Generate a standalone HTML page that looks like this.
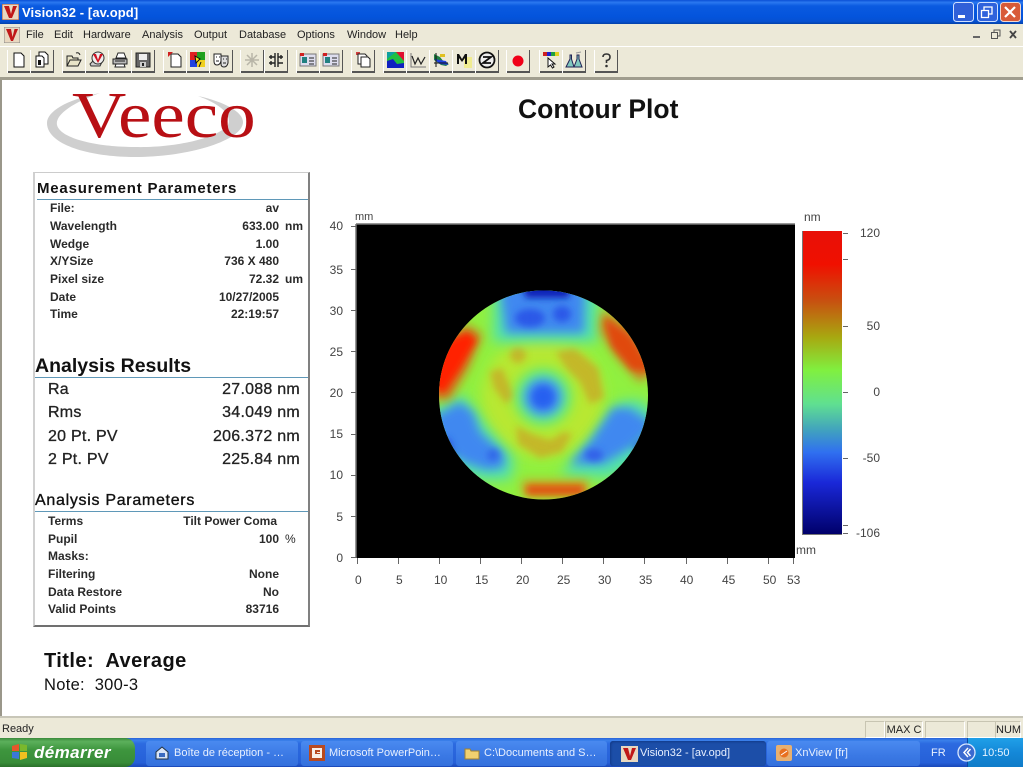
<!DOCTYPE html>
<html><head><meta charset="utf-8"><title>Vision32</title>
<style>
html,body{margin:0;padding:0}
body{width:1023px;height:767px;position:relative;overflow:hidden;background:#fff;font-family:"Liberation Sans",sans-serif;color:#111}
.a,.r{position:absolute;white-space:pre;line-height:16px;height:16px}
.r{text-align:right}
.b{position:absolute}
.l{font-weight:bold;font-size:12px;color:#2a2a2a}
.res{font-size:16px;letter-spacing:.25px;color:#222;-webkit-text-stroke:.3px #222}
.ax{font-size:12px;color:#444}
.m{font-size:11px;color:#222;top:27px}
.tb{position:absolute;top:50px;width:22px;height:21px;background:#ece9d8;border-right:1px solid #555;border-bottom:2px solid #555;box-shadow:-1px 0 0 #fff}
.tb svg{position:absolute;left:2px;top:1px}
.task{position:absolute;top:741px;height:25px;border-radius:3px;background:linear-gradient(#4a8af0,#3a78e4 60%,#3470dc);color:#e8f0ff;font-size:11px;line-height:24px;white-space:pre;padding-left:28px;box-sizing:border-box;overflow:hidden}
.task svg{position:absolute;left:8px;top:4px}
.pane{position:absolute;top:721px;height:15px;border:1px solid #c8c5b2;border-right-color:#fff;border-bottom-color:#fff;font-size:11px;line-height:16px;text-align:center;color:#222;white-space:pre;box-sizing:content-box}
</style></head><body>

<!-- Title bar -->
<div class="b" style="left:0;top:0;width:1023px;height:24px;background:linear-gradient(#0a4fd6 0,#2a78f0 10%,#0a5ae0 25%,#0454dc 70%,#0650d0 90%,#0340a8 100%)"></div>
<svg class="b" style="left:2px;top:4px" width="17" height="16"><rect width="17" height="16" fill="#e8d8c0" stroke="#b05030"/><path d="M2 2h5l2 8 2-8h4l-5 12H7z" fill="#c01818"/></svg>
<div class="a" style="left:22px;top:5px;color:#fff;font-weight:bold;font-size:13px;letter-spacing:.1px">Vision32 - [av.opd]</div>
<svg class="b" style="left:953px;top:2px" width="68" height="20">
 <rect x=".5" y=".5" width="20" height="19" rx="3" fill="#3060d8" stroke="#cfe0ff"/><rect x="5" y="13" width="7" height="3" fill="#fff"/>
 <rect x="24.5" y=".5" width="20" height="19" rx="3" fill="#2f62dc" stroke="#cfe0ff"/><path d="M31 8V5h8v7h-3M28.500 8.500h7v7h-7z" fill="none" stroke="#fff" stroke-width="1.300"/>
 <rect x="47.500" y=".5" width="20" height="19" rx="3" fill="#d85a38" stroke="#f0d8d0"/><path d="M52 5l10 10M62 5L52 15" stroke="#fff" stroke-width="2.200"/>
</svg>

<!-- Menu bar -->
<div class="b" style="left:0;top:24px;width:1023px;height:22px;background:#ece9d8"></div>
<svg class="b" style="left:4px;top:27px" width="16" height="16"><rect width="16" height="16" fill="#e8d8c0" stroke="#888"/><path d="M2 2h5l1.500 8 2-8h3.500l-5 12H7z" fill="#c01818"/></svg>
<div class="a m" style="left:26px">File</div>
<div class="a m" style="left:54px">Edit</div>
<div class="a m" style="left:83px">Hardware</div>
<div class="a m" style="left:142px">Analysis</div>
<div class="a m" style="left:194px">Output</div>
<div class="a m" style="left:239px">Database</div>
<div class="a m" style="left:297px">Options</div>
<div class="a m" style="left:347px">Window</div>
<div class="a m" style="left:395px">Help</div>
<svg class="b" style="left:970px;top:28px" width="50" height="14"><rect x="3" y="8" width="7" height="2" fill="#666"/><path d="M24 4V2h6v6h-2M21.500 4.500h6v6h-6z" fill="none" stroke="#555"/><path d="M40 3l6 7M46 3l-6 7" stroke="#444" stroke-width="1.800"/></svg>

<!-- Toolbar -->
<div class="b" style="left:0;top:46px;width:1023px;height:31px;background:#ece9d8;border-top:1px solid #fff;box-sizing:border-box"></div>
<div class="b" style="left:0;top:77px;width:1023px;height:3px;background:#a09d8e"></div>

<div class="tb" style="left:8px"><svg width="18" height="18"><path d="M4 2h7l3 3v11H4z" fill="#fff" stroke="#111"/></svg></div>
<div class="tb" style="left:31px"><svg width="18" height="18"><path d="M6 1h6l3 3v9H6z" fill="#fff" stroke="#111"/><path d="M3 5h6l2 2v9H3z" fill="#fff" stroke="#111"/><path d="M5 9h3v5H5z" fill="#111"/></svg></div>
<div class="tb" style="left:63px"><svg width="18" height="18"><path d="M2 15V5h5l1 2h5v2M2 15l3-6h11l-3 6z" fill="#e8e4c8" stroke="#222"/><path d="M11 2q3-1 4 2" fill="none" stroke="#222"/></svg></div>
<div class="tb" style="left:86px"><svg width="18" height="18"><path d="M2 13l4-4h9l-3 6H3z" fill="#ccc" stroke="#333"/><circle cx="10" cy="7" r="6" fill="#eee" stroke="#333"/><path d="M5 3h3l2 6 2-6h3l-5 9z" fill="#d01020"/></svg></div>
<div class="tb" style="left:109px"><svg width="18" height="18"><path d="M5 7l2-5h6l2 5z" fill="#fff" stroke="#222"/><path d="M2 8h14v5H2z" fill="#bbb" stroke="#222"/><path d="M5 13h8l1 3H4z" fill="#fff" stroke="#222"/><path d="M4 10h10" stroke="#222"/></svg></div>
<div class="tb" style="left:132px"><svg width="18" height="18"><path d="M2 2h14v14H2z" fill="#666" stroke="#222"/><path d="M5 3h8v6H5z" fill="#eee"/><path d="M6 11h6v5H6z" fill="#ccc"/><path d="M8 12h2v3H8z" fill="#222"/></svg></div>
<div class="tb" style="left:164px"><svg width="18" height="18"><path d="M5 3h7l3 3v10H5z" fill="#fff" stroke="#222"/><path d="M2 1h5L2 6z" fill="#d02020"/></svg></div>
<div class="tb" style="left:187px"><svg width="18" height="18"><rect x="1" y="1" width="7" height="8" fill="#e02020"/><rect x="8" y="1" width="8" height="8" fill="#20a020"/><rect x="1" y="9" width="7" height="7" fill="#2040e0"/><rect x="8" y="9" width="8" height="7" fill="#f0d020"/><path d="M6 5l5 3-4 4zM12 11l-2 5" stroke="#111" fill="#f0e020"/></svg></div>
<div class="tb" style="left:210px"><svg width="18" height="18"><path d="M2 3h7v7q-1 4-4 4T2 10z" fill="#fff" stroke="#222"/><path d="M9 5h7v7q-1 4-4 4t-3-3z" fill="#ddd" stroke="#222"/><path d="M4 6h1M7 6h1M11 8h1M14 8h1M4 10h3M11 12h3" stroke="#222"/></svg></div>
<div class="tb" style="left:241px"><svg width="18" height="18"><path d="M9 2v14M2 9h14M4 4l10 10M14 4L4 14" stroke="#b8b5a8" stroke-width="1.500"/></svg></div>
<div class="tb" style="left:265px"><svg width="18" height="18"><path d="M8 2v14M11 2v14M2 6h6M2 12h6M11 6h5M11 12h5M4 4v4M14 4v4M4 10v4" stroke="#222" stroke-width="1.400" fill="none"/></svg></div>
<div class="tb" style="left:297px"><svg width="18" height="18"><rect x="1" y="3" width="16" height="12" fill="#dde" stroke="#777"/><rect x="1" y="2" width="4" height="3" fill="#d02020"/><rect x="3" y="6" width="5" height="6" fill="#208080"/><path d="M10 7h5M10 10h5M10 13h5" stroke="#222"/></svg></div>
<div class="tb" style="left:320px"><svg width="18" height="18"><rect x="1" y="3" width="16" height="12" fill="#dde" stroke="#777"/><rect x="1" y="2" width="4" height="3" fill="#d02020"/><rect x="3" y="6" width="5" height="6" fill="#208080"/><path d="M10 7h5M10 10h5M10 13h5" stroke="#222"/></svg></div>
<div class="tb" style="left:352px"><svg width="18" height="18"><path d="M2 1h4v3H2z" fill="#d04040"/><path d="M4 3h7l2 2v8H4z" fill="#fff" stroke="#222"/><path d="M7 6h7l2 2v8H7z" fill="#fff" stroke="#222"/></svg></div>
<div class="tb" style="left:384px"><svg width="18" height="18"><rect x="1" y="1" width="17" height="16" fill="#20c040"/><path d="M1 1h9L1 8z" fill="#10a0a0"/><path d="M10 1h8v9z" fill="#e01030"/><path d="M1 10l6-2 4 5 7-1v5H1z" fill="#1020c0"/></svg></div>
<div class="tb" style="left:407px"><svg width="18" height="18"><path d="M2 2v14h15" fill="none" stroke="#777"/><path d="M3 5l3 8 3-6 3 6 4-7" fill="none" stroke="#222" stroke-width="1.200"/></svg></div>
<div class="tb" style="left:430px"><svg width="18" height="18"><path d="M2 3l6 3 4 5 5 2-3 2-5-1-4-3-3-2z" fill="#208040"/><path d="M2 8l12 2 2 4-8-1z" fill="#2040e0"/><path d="M4 2v14M2 12h14" stroke="#111"/><path d="M8 3h5v3H8z" fill="#e0c020"/></svg></div>
<div class="tb" style="left:453px"><svg width="18" height="18"><rect x="9" y="6" width="8" height="11" fill="#f0ec90"/><path d="M2 13V3h2l3 5 3-5h2v10h-2V7l-3 4-3-4v6z" fill="#111"/></svg></div>
<div class="tb" style="left:476px"><svg width="18" height="18"><circle cx="9" cy="9" r="7.500" fill="#eee" stroke="#111" stroke-width="1.800"/><path d="M5 6h8L5 12h8" fill="none" stroke="#111" stroke-width="1.800"/></svg></div>
<div class="tb" style="left:507px"><svg width="18" height="18"><circle cx="9" cy="10" r="5.500" fill="#f00018"/></svg></div>
<div class="tb" style="left:540px"><svg width="18" height="18"><rect x="1" y="1" width="4" height="4" fill="#d02020"/><rect x="5" y="1" width="4" height="4" fill="#2020d0"/><rect x="9" y="1" width="4" height="4" fill="#20a040"/><rect x="13" y="1" width="4" height="4" fill="#e0d020"/><path d="M6 7v9l2.500-2 2 3 1.500-1-2-3h3z" fill="#fff" stroke="#111"/></svg></div>
<div class="tb" style="left:563px"><svg width="18" height="18"><path d="M5 4v4l-4 8h8L6.500 8V4zM12 4v4l-3 8h8l-3-8V4z" fill="#80c8c0" stroke="#225"/><path d="M11 2l5-1" stroke="#999"/></svg></div>
<div class="tb" style="left:595px"><svg width="18" height="18"><path d="M6 6q0-3 3.500-3t3.500 3-3.500 3.500v2.500" fill="none" stroke="#333" stroke-width="1.600"/><circle cx="9.500" cy="15" r="1.300" fill="#333"/></svg></div>

<!-- Client area -->
<div class="b" style="left:0;top:80px;width:2px;height:638px;background:#9a978a"></div>
<div class="b" style="left:0;top:716px;width:1023px;height:2px;background:#c8c6b8"></div>

<!-- Logo -->
<svg class="b" style="left:0;top:0" width="300" height="170">
 <path d="M100 93C65 100 47 112 47 123C47 145 90 157 135 157C190 157 243 140 243 122C243 112 225 102 198 96C222 105 232 115 228 125C218 138 175 148 135 147C95 147 60 138 57 125C55 115 72 103 100 93z" fill="#cfcfcf"/>
 <text transform="translate(72,137) scale(1.14,1)" font-family="Liberation Serif" font-size="66" fill="#b80f14">Veeco</text>
</svg>

<!-- Heading -->
<div class="a" style="left:518px;top:94px;height:30px;line-height:30px;font-weight:bold;font-size:26.500px;color:#111">Contour Plot</div>

<!-- Panel -->
<div class="b" style="left:33px;top:172px;width:277px;height:455px;background:#fff;border-top:1px solid #ccc;border-left:2px solid #d0d0d0;border-right:2px solid #808080;border-bottom:2px solid #707070;box-sizing:border-box"></div>

<div class="a" style="left:37px;top:181px;font-size:15px;font-weight:bold;letter-spacing:.8px;color:#111">Measurement Parameters</div>
<div class="b" style="left:37px;top:199px;width:271px;height:1px;background:#5f98b8"></div>
<div class="a l" style="left:50px;top:200px">File:</div><div class="r l" style="right:744px;top:200px">av</div>
<div class="a l" style="left:50px;top:218px">Wavelength</div><div class="r l" style="right:744px;top:218px">633.00</div><div class="a l" style="left:285px;top:218px">nm</div>
<div class="a l" style="left:50px;top:236px">Wedge</div><div class="r l" style="right:744px;top:236px">1.00</div>
<div class="a l" style="left:50px;top:253px">X/YSize</div><div class="r l" style="right:744px;top:253px">736 X 480</div>
<div class="a l" style="left:50px;top:271px">Pixel size</div><div class="r l" style="right:744px;top:271px">72.32</div><div class="a l" style="left:285px;top:271px">um</div>
<div class="a l" style="left:50px;top:289px">Date</div><div class="r l" style="right:744px;top:289px">10/27/2005</div>
<div class="a l" style="left:50px;top:306px">Time</div><div class="r l" style="right:744px;top:306px">22:19:57</div>

<div class="a" style="left:35px;top:355px;height:22px;line-height:22px;font-size:19.500px;font-weight:bold;color:#111">Analysis Results</div>
<div class="b" style="left:35px;top:377px;width:273px;height:1px;background:#5f98b8"></div>
<div class="a res" style="left:48px;top:382px">Ra</div><div class="r res" style="right:723px;top:382px">27.088 nm</div>
<div class="a res" style="left:48px;top:405px">Rms</div><div class="r res" style="right:723px;top:405px">34.049 nm</div>
<div class="a res" style="left:48px;top:429px">20 Pt. PV</div><div class="r res" style="right:723px;top:429px">206.372 nm</div>
<div class="a res" style="left:48px;top:452px">2 Pt. PV</div><div class="r res" style="right:723px;top:452px">225.84 nm</div>

<div class="a" style="left:35px;top:493px;font-size:16px;letter-spacing:.7px;color:#111;-webkit-text-stroke:.35px #111">Analysis Parameters</div>
<div class="b" style="left:35px;top:511px;width:273px;height:1px;background:#5f98b8"></div>
<div class="a l" style="left:48px;top:513px">Terms</div><div class="r l" style="right:746px;top:513px">Tilt Power Coma</div>
<div class="a l" style="left:48px;top:531px">Pupil</div><div class="r l" style="right:744px;top:531px">100</div><div class="a l" style="left:285px;top:531px;font-weight:normal">%</div>
<div class="a l" style="left:48px;top:548px">Masks:</div>
<div class="a l" style="left:48px;top:566px">Filtering</div><div class="r l" style="right:744px;top:566px">None</div>
<div class="a l" style="left:48px;top:584px">Data Restore</div><div class="r l" style="right:744px;top:584px">No</div>
<div class="a l" style="left:48px;top:601px">Valid Points</div><div class="r l" style="right:744px;top:601px">83716</div>

<div class="a" style="left:44px;top:650px;height:22px;line-height:22px;font-size:20px;font-weight:bold;letter-spacing:.45px;color:#111">Title:  Average</div>
<div class="a" style="left:44px;top:677px;font-size:16.500px;letter-spacing:.3px;color:#111">Note:  300-3</div>

<!-- Plot -->
<svg class="b" style="left:0;top:0" width="1023" height="767">
 <defs>
  <clipPath id="c"><circle cx="543.500" cy="395" r="104.500"/></clipPath>
  <filter id="f8" x="-50%" y="-50%" width="200%" height="200%"><feGaussianBlur stdDeviation="6.500"/></filter>
  <filter id="f5" x="-50%" y="-50%" width="200%" height="200%"><feGaussianBlur stdDeviation="5"/></filter>
  <filter id="f3" x="-50%" y="-50%" width="200%" height="200%"><feGaussianBlur stdDeviation="3.500"/></filter>
  <linearGradient id="cb" x1="0" y1="0" x2="0" y2="1">
   <stop offset="0" stop-color="#e81008"/><stop offset=".11" stop-color="#f01000"/><stop offset=".23" stop-color="#c85010"/><stop offset=".35" stop-color="#a8a810"/><stop offset=".46" stop-color="#80f040"/><stop offset=".57" stop-color="#60e090"/><stop offset=".66" stop-color="#40a0c0"/><stop offset=".73" stop-color="#3070f0"/><stop offset=".83" stop-color="#1a28d8"/><stop offset="1" stop-color="#00006a"/>
  </linearGradient>
 </defs>
 <rect x="356" y="224" width="439" height="334" fill="#000"/>
 <path d="M356 224H795M356 224V558" stroke="#777" stroke-width="1.500" fill="none"/>
 <g clip-path="url(#c)">
  <rect x="430" y="285" width="230" height="225" fill="#90f040"/>
  <!-- yellow-green ring -->
  <circle cx="543" cy="397" r="46" fill="none" stroke="#b8e830" stroke-width="30" filter="url(#f8)"/>
  <!-- olive -->
  <g filter="url(#f3)" fill="#c8a828" opacity=".75">
   <circle cx="518" cy="355" r="8"/>
   <path d="M556 352l18-4 24 20 6 30-14 6-10-22-14-14z"/>
   <path d="M490 372l12-4 12 28-8 8-12-16z"/>
   <path d="M516 426l16 8 18 6 14-8 8 2-10 18-22 6-22-14z"/>
  </g>
  <!-- cyan halos -->
  <g filter="url(#f8)" fill="#50e0b0">
   <path d="M494 285H598L597 342H493z"/>
   <circle cx="543" cy="397" r="25"/>
   <path d="M432 412L462 394 490 432 515 460 510 480 480 480 450 470 432 445z"/>
   <path d="M655 415L645 460 610 478 560 475 595 435 618 402 640 400z"/>
  </g>
  <!-- blues -->
  <g filter="url(#f5)" fill="#4088f0">
   <path d="M500 285H585L584 333H506z"/>
   <circle cx="543" cy="397" r="18"/>
   <path d="M460 402L473 412 480 432 505 455 503 468 487 470 463 462 440 445 432 418z"/>
   <path d="M655 425L632 447 603 464 570 464 590 442 613 408 630 408z"/>
  </g>
  <g filter="url(#f3)">
   <path d="M520 280H574L568 298H526z" fill="#1020b8"/>
   <ellipse cx="530" cy="318" rx="15" ry="9" fill="#2a58e8"/>
   <ellipse cx="562" cy="314" rx="9" ry="8" fill="#2a58e8"/>
   <circle cx="543" cy="397" r="11" fill="#2860f0"/>
   <ellipse cx="493" cy="455" rx="6" ry="6" fill="#3068e8"/>
   <path d="M434 435l16 4 6 18-12 8z" fill="#2850e0"/>
   <ellipse cx="594" cy="455" rx="9" ry="6" fill="#3060e8"/>
   <path d="M652 428l-20 18 8 8 14-12z" fill="#3060e8"/>
  </g>
  <!-- reds -->
  <g filter="url(#f5)">
   <path d="M467 325L482 335 468 368 449 400 430 398 432 360 450 336z" fill="#d86818"/>
   <path d="M603 310L632 328 658 368 640 382 615 355 600 330z" fill="#d07820"/>
   <path d="M522 481L588 481 588 497 524 497z" fill="#d89020"/>
  </g>
  <g filter="url(#f3)">
   <path d="M467 333L476 340 460 368 444 392 430 386 434 356 450 340z" fill="#ff2000"/>
   <path d="M604 318L630 336 652 370 632 370 612 346z" fill="#e04810"/>
   <path d="M527 486H583V494H527z" fill="#e05010"/>
  </g>
 </g>
 <!-- axis ticks -->
 <path d="M351 226.500h5M351 269.500h5M351 310.500h5M351 351.500h5M351 392.500h5M351 434.500h5M351 475.500h5M351 516.500h5M351 557.500h5M357.500 558v6M398.500 558v6M439.500 558v6M480.500 558v6M521.500 558v6M562.500 558v6M603.500 558v6M644.500 558v6M686.500 558v6M727.500 558v6M768.500 558v6M793.500 558v6" stroke="#666" stroke-width="1"/>
 <!-- colorbar -->
 <rect x="803" y="231" width="39" height="303" fill="url(#cb)"/>
 <path d="M802.500 231v303.500H842" stroke="#777" fill="none"/>
 <path d="M843 233.500h5M843 259.500h5M843 326.500h5M843 392.500h5M843 458.500h5M843 525.500h5M843 533.500h5" stroke="#666"/>
</svg>

<div class="r ax" style="right:680px;top:218px">40</div>
<div class="r ax" style="right:680px;top:262px">35</div>
<div class="r ax" style="right:680px;top:303px">30</div>
<div class="r ax" style="right:680px;top:344px">25</div>
<div class="r ax" style="right:680px;top:385px">20</div>
<div class="r ax" style="right:680px;top:426px">15</div>
<div class="r ax" style="right:680px;top:467px">10</div>
<div class="r ax" style="right:680px;top:509px">5</div>
<div class="r ax" style="right:680px;top:550px">0</div>
<div class="a ax" style="left:355px;top:572px">0</div>
<div class="a ax" style="left:396px;top:572px">5</div>
<div class="a ax" style="left:434px;top:572px">10</div>
<div class="a ax" style="left:475px;top:572px">15</div>
<div class="a ax" style="left:516px;top:572px">20</div>
<div class="a ax" style="left:557px;top:572px">25</div>
<div class="a ax" style="left:598px;top:572px">30</div>
<div class="a ax" style="left:639px;top:572px">35</div>
<div class="a ax" style="left:680px;top:572px">40</div>
<div class="a ax" style="left:722px;top:572px">45</div>
<div class="a ax" style="left:763px;top:572px">50</div>
<div class="a ax" style="left:787px;top:572px">53</div>
<div class="a ax" style="left:355px;top:209px;font-size:11px">mm</div>
<div class="a ax" style="left:796px;top:542px">mm</div>
<div class="a ax" style="left:804px;top:209px">nm</div>
<div class="r ax" style="right:143px;top:225px">120</div>
<div class="r ax" style="right:143px;top:318px">50</div>
<div class="r ax" style="right:143px;top:384px">0</div>
<div class="r ax" style="right:143px;top:450px">-50</div>
<div class="r ax" style="right:143px;top:525px">-106</div>

<!-- Status bar -->
<div class="b" style="left:0;top:718px;width:1023px;height:20px;background:#ece9d8"></div>
<div class="a" style="left:2px;top:721px;font-size:11px;color:#222">Ready</div>
<div class="pane" style="left:865px;width:18px"></div>
<div class="pane" style="left:885px;width:36px">MAX C</div>
<div class="pane" style="left:925px;width:38px"></div>
<div class="pane" style="left:967px;width:27px"></div>
<div class="pane" style="left:995px;width:24px">NUM</div>

<!-- Taskbar -->
<div class="b" style="left:0;top:738px;width:1023px;height:29px;background:linear-gradient(#2a62d8 0,#3a80ea 8%,#2c6ae0 20%,#2660d8 85%,#1a48b8 100%)"></div>
<div class="b" style="left:0;top:738px;width:135px;height:29px;border-radius:0 10px 10px 0;background:linear-gradient(#3a8a3a 0,#5cb05c 12%,#3e963e 40%,#388c38 85%,#2a702a 100%)"></div>
<svg class="b" style="left:11px;top:743px" width="18" height="18"><path d="M1 3l7-2v7H1z" fill="#e8562a"/><path d="M9 1l7 1 0 6H9z" fill="#7ab82c"/><path d="M1 9h7v7l-7-1z" fill="#3a78d8"/><path d="M9 9h7v6l-7 2z" fill="#f0c020"/></svg>
<div class="a" style="left:34px;top:743px;height:20px;line-height:20px;color:#fff;font-style:italic;font-weight:bold;font-size:17px;letter-spacing:.4px">démarrer</div>

<div class="task" style="left:146px;width:152px">Boîte de réception - …<svg width="16" height="16"><path d="M2 7l6-5 6 5v7H2z" fill="#d8e4f8" stroke="#234"/><path d="M5 8h6v4H5z" fill="#3a6ac0"/></svg></div>
<div class="task" style="left:301px;width:152px">Microsoft PowerPoin…<svg width="16" height="16"><rect width="16" height="16" fill="#b84a20"/><rect x="3" y="3" width="10" height="10" fill="#f8f0e8"/><path d="M6 5h5v2H8v1h3v1H6z" fill="#b84a20"/></svg></div>
<div class="task" style="left:456px;width:151px">C:\Documents and S…<svg width="16" height="16"><path d="M1 4h5l1 2h8v8H1z" fill="#f0d070" stroke="#a08030"/></svg></div>
<div class="task" style="left:610px;width:156px;background:#1c4ea8;box-shadow:inset 1px 1px 2px #123a88;padding-left:30px;line-height:25px">Vision32 - [av.opd]<svg width="17" height="16" style="left:11px;top:5px"><rect width="17" height="16" fill="#e8d8c0"/><path d="M2 2h5l2 8 2-8h4l-5 12H7z" fill="#c01818"/></svg></div>
<div class="task" style="left:767px;width:153px;padding-left:28px">XnView [fr]<svg width="16" height="16" style="left:9px"><rect width="16" height="16" rx="2" fill="#e8b070"/><circle cx="8" cy="8" r="4.500" fill="#e87020"/><path d="M5 10l6-4" stroke="#fff"/></svg></div>

<div class="a" style="left:931px;top:745px;color:#e8f0ff;font-size:11px">FR</div>
<div class="b" style="left:967px;top:738px;width:56px;height:29px;background:linear-gradient(#20a0e8,#1488d8 50%,#107cc8);border-left:1px solid #0a48a0;box-sizing:border-box"></div>
<svg class="b" style="left:957px;top:743px" width="19" height="19"><circle cx="9.500" cy="9.500" r="8.500" fill="#3a6ad0" stroke="#d8e8ff" stroke-width="1.300"/><path d="M11 5L7 9.500 11 14M13.500 6l-3 3.500 3 3.500" fill="none" stroke="#fff" stroke-width="1.500"/></svg>
<div class="a" style="left:982px;top:745px;color:#e8f4ff;font-size:11px">10:50</div>

</body></html>
